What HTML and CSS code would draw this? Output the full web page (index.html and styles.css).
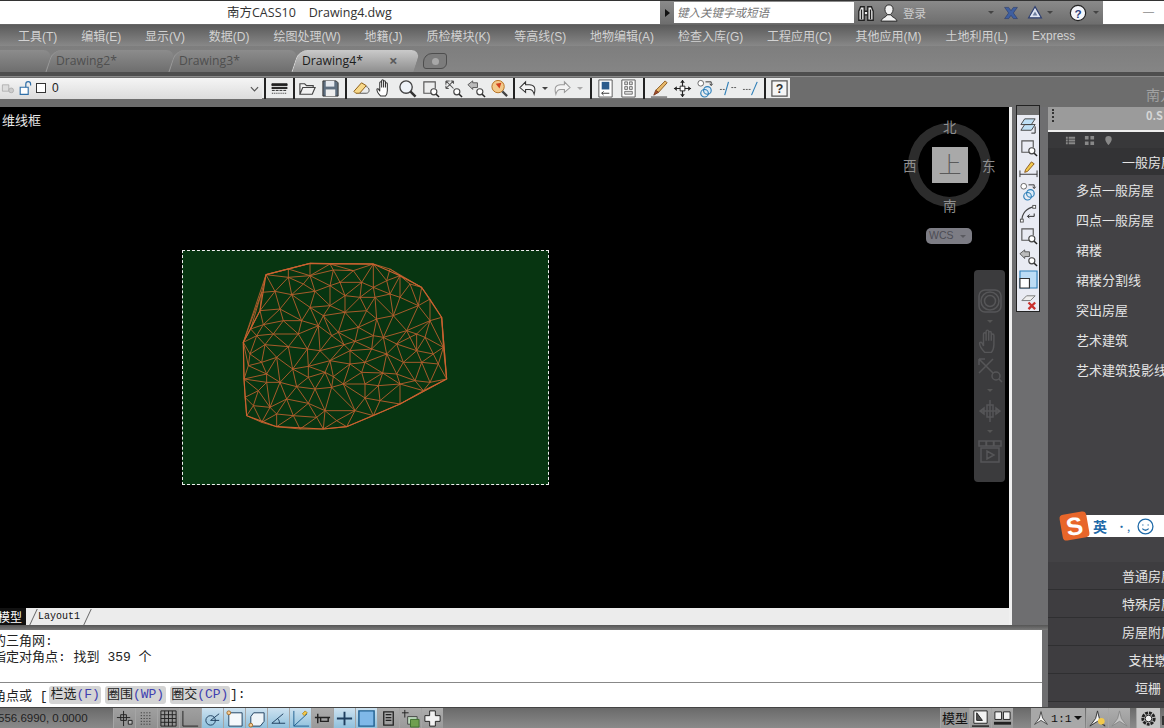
FILE: index.html
```html
<!DOCTYPE html>
<html lang="zh-CN">
<head>
<meta charset="utf-8">
<title>南方CASS10 Drawing4.dwg</title>
<link rel="stylesheet" href="styles.css">
</head>
<body>
<svg class="defs" width="0" height="0">
  <symbol id="mag" viewBox="0 0 20 20"><circle cx="8.500" cy="8.500" r="6.500" fill="#eef3f8" stroke="#444" stroke-width="1.400"/><path d="M13 13l5.500 5.500" stroke="#333" stroke-width="2.600" fill="none"/></symbol>
  <symbol id="zwin" viewBox="0 0 20 20"><path d="M11 15H3V3h12v7" fill="none" stroke="#555" stroke-width="1.200"/><circle cx="13.500" cy="13.500" r="3.200" fill="#fff" stroke="#444" stroke-width="1.200"/><path d="M16 16l3 3" stroke="#222" stroke-width="1.600"/></symbol>
  <symbol id="zext" viewBox="0 0 20 20"><path d="M2 2l8 8M2 2h4M2 2v4M10 2l-8 8M2 10h3M2 10V7M10 2H7M10 2v3" fill="none" stroke="#555" stroke-width="1.100"/><circle cx="13.500" cy="13.500" r="3.200" fill="#fff" stroke="#444" stroke-width="1.200"/><path d="M16 16l3 3" stroke="#222" stroke-width="1.600"/></symbol>
  <symbol id="zprev" viewBox="0 0 20 20"><path d="M1 6l5-4v2h5v5H6v2z" fill="#bbb" stroke="#555"/><circle cx="13.500" cy="13.500" r="3.200" fill="#fff" stroke="#444" stroke-width="1.200"/><path d="M16 16l3 3" stroke="#222" stroke-width="1.600"/></symbol>
  <symbol id="two" viewBox="0 0 20 20"><path d="M6 3h11L13 9H2zM6 9h11l-4 6H2z" fill="#bfe0f5" stroke="#444"/><path d="M17 11v7h-4" fill="none" stroke="#222"/></symbol>
  <symbol id="circles" viewBox="0 0 20 20"><circle cx="5" cy="4.500" r="3" fill="#fff" stroke="#666"/><circle cx="12" cy="12" r="4" fill="#dcebf7" stroke="#2f7fb8" stroke-width="1.200"/><circle cx="9" cy="15" r="4" fill="none" stroke="#2f7fb8" stroke-width="1.200"/><path d="M10 3h6v3M14.500 5l1.500 2 1.500-2" fill="none" stroke="#333"/></symbol>
  <symbol id="hand" viewBox="0 0 20 20"><path d="M6 18c-2-2-4-5-4-7 0-1 1.500-1 2 0l1 2V4c0-1.500 2-1.500 2 0v5-7c0-1.500 2-1.500 2 0v7-6c0-1.500 2-1.500 2 0v6-4c0-1.500 2-1.500 2 0v7c0 3-1 5-2 6z" fill="#fff" stroke="#333" stroke-width="1.100"/></symbol>
</svg>

<header class="titlebar">
  <div class="title">南方CASS10 &nbsp;&nbsp; Drawing4.dwg</div>
  <div class="infocenter">
    <span class="ic-arrow"></span>
    <span class="search">键入关键字或短语</span>
    <svg class="ic ic-bino" viewBox="0 0 20 20"><path d="M2 18V8l2-5h4v15zM18 18V8l-2-5h-4v15zM8 8h4v4H8z" fill="#eee" stroke="#222" stroke-width="1.500"/><path d="M5 6v11M15 6v11" stroke="#222" stroke-width="1.500"/></svg>
    <svg class="ic ic-user" viewBox="0 0 20 20"><path d="M10 1c-3 0-4.500 2-4.500 5s2 6 4.500 6 4.500-3 4.500-6-1.500-5-4.500-5z" fill="#f2f2f2" stroke="#222"/><path d="M1 19c1-4 6-4 7-7h4c1 3 6 3 7 7z" fill="#f2f2f2" stroke="#222"/></svg>
    <span class="login">登录</span>
    <span class="drop drop-user"></span>
    <svg class="ic ic-x" viewBox="0 0 20 20"><path d="M2 3h5l3 4 3-4h5l-5 7 5 7h-5l-3-4-3 4H2l5-7z" fill="#3f5f9f" stroke="#1d2f60" stroke-width=".600"/></svg>
    <svg class="ic ic-a" viewBox="0 0 20 20"><path d="M10 2l8 14H2z" fill="#dfe5f2" stroke="#2e3f70" stroke-width="1.500"/><path d="M10 8l3 5H7z" fill="#6f7f9f"/></svg>
    <span class="drop drop-a"></span>
    <svg class="ic ic-help" viewBox="0 0 20 20"><circle cx="10" cy="10" r="8.500" fill="#f4f6fb" stroke="#222" stroke-width="1.300"/><text x="10" y="15" text-anchor="middle" class="help-q">?</text></svg>
    <span class="drop drop-help"></span>
  </div>
  <div class="minimize">—</div>
</header>

<nav class="menubar">
  <span>工具(T)</span><span>编辑(E)</span><span>显示(V)</span><span>数据(D)</span><span>绘图处理(W)</span><span>地籍(J)</span><span>质检模块(K)</span><span>等高线(S)</span><span>地物编辑(A)</span><span>检查入库(G)</span><span>工程应用(C)</span><span>其他应用(M)</span><span>土地利用(L)</span><span>Express</span>
</nav>

<div class="tabbar">
  <div class="tab tab-first"></div>
  <div class="tab">Drawing2*</div>
  <div class="tab">Drawing3*</div>
  <div class="tab tab-active">Drawing4*<span class="tab-x">×</span></div>
  <div class="tab-new"><span></span></div>
</div>

<div class="toolrow">
  <div class="toolbar">
    <div class="layer">
      <svg class="ic16" viewBox="0 0 20 20"><path d="M3 6h8v8H3z" fill="#ddd" stroke="#aaa"/><circle cx="14" cy="13" r="3" fill="#ccc" stroke="#aaa"/></svg>
      <svg class="ic16" viewBox="0 0 20 20"><path d="M4 9h10v9H4z" fill="#fff" stroke="#2f6fa8" stroke-width="1.400"/><path d="M11 9V5c0-4 6-4 6 0v2" fill="none" stroke="#2f6fa8" stroke-width="1.500"/></svg>
      <span class="swatch"></span>
      <span class="layer-name">0</span>
      <svg class="chev" viewBox="0 0 10 6"><path d="M1 1l4 4 4-4" fill="none" stroke="#555" stroke-width="1.300"/></svg>
    </div>
    <i class="sep"></i>
    <span class="tb tb-s"><svg viewBox="0 0 20 20"><path d="M2 5h16v2H2zM2 9h16v1H2zM2 12h3m1 0h3m1 0h3m1 0h3M2 15h1m1 0h1m1 0h1m1 0h1m1 0h1m1 0h1m1 0h1m1 0h1" stroke="#222" fill="#222"/></svg></span>
    <i class="sep"></i>
    <span class="tb"><svg viewBox="0 0 20 20"><path d="M2 16V5h5l2 2h7v2M2 16l3-7h13l-3 7z" fill="#f2f2f2" stroke="#444" stroke-width="1.200"/></svg></span>
    <span class="tb"><svg viewBox="0 0 20 20"><path d="M2 2h14l2 2v14H2z" fill="#5f6f80" stroke="#333"/><path d="M5 2h9v6H5z" fill="#e4e8ee"/><path d="M5 11h10v7H5z" fill="#eee"/></svg></span>
    <i class="sep sep-w"></i>
    <span class="tb"><svg viewBox="0 0 20 20"><path d="M2 13L10 4l5 3-7 8H4z" fill="#f8d98a" stroke="#8a5a10"/><path d="M8 15h7c4 0 4-6 0-7" fill="none" stroke="#555"/></svg></span>
    <span class="tb"><svg viewBox="0 0 20 20"><use href="#hand"/></svg></span>
    <span class="tb"><svg viewBox="0 0 20 20"><use href="#mag"/></svg></span>
    <span class="tb"><svg viewBox="0 0 20 20"><use href="#zwin"/></svg></span>
    <span class="tb"><svg viewBox="0 0 20 20"><use href="#zext"/></svg></span>
    <span class="tb"><svg viewBox="0 0 20 20"><use href="#zprev"/></svg></span>
    <span class="tb"><svg viewBox="0 0 20 20"><circle cx="8.500" cy="8" r="6.500" fill="#f3c98a" stroke="#b5701f"/><path d="M6 5l6-1-2 6z" fill="#d2401e"/><path d="M13 13l5 5" stroke="#444" stroke-width="2.400"/></svg></span>
    <i class="sep"></i>
    <span class="tb"><svg viewBox="0 0 20 20"><path d="M2 9l6-6v3h4c5 0 7 3 5 10-1-4-3-5-5-5H8v3z" fill="#f4f4f4" stroke="#333" stroke-width="1.100"/></svg></span>
    <span class="tb-drop"></span>
    <span class="tb tb-off"><svg viewBox="0 0 20 20"><path d="M18 9l-6-6v3H8c-5 0-7 3-5 10 1-4 3-5 5-5h4v3z" fill="#f4f4f4" stroke="#999" stroke-width="1.100"/></svg></span>
    <span class="tb-drop tb-drop-off"></span>
    <i class="sep sep-l"></i>
    <span class="tb"><svg viewBox="0 0 20 20"><path d="M3 1h14v18H3z" fill="#fff" stroke="#555"/><path d="M6 3h8v8H6z" fill="#2c5c8c"/><path d="M6 15h8M6 15l2-2M6 15l2 2" stroke="#333" fill="none"/></svg></span>
    <span class="tb"><svg viewBox="0 0 20 20"><path d="M3 1h14v18H3z" fill="#fff" stroke="#555"/><path d="M6 3h3v3H6zM11 3h3v3h-3zM6 8h3v3H6zM11 8h3v3h-3zM6 13h8v3H6z" fill="#ddd" stroke="#555" stroke-width=".800"/></svg></span>
    <i class="sep sep-w"></i>
    <span class="tb"><svg viewBox="0 0 20 20"><path d="M16 2l2 2-9 10-3-2z" fill="#e8b96a" stroke="#8a5a20"/><path d="M6 12l3 2-5 3z" fill="#a8502a" stroke="#7a3a20"/><path d="M1 19h17" stroke="#333"/></svg></span>
    <span class="tb"><svg viewBox="0 0 20 20"><path d="M10 1v18M1 10h18" stroke="#222" stroke-width="1.200"/><path d="M10 1l-2.500 3h5zM10 19l-2.500-3h5zM1 10l3-2.500v5zM19 10l-3-2.500v5z" fill="#222"/><path d="M7.500 7.500h5v5h-5z" fill="#fff" stroke="#222"/></svg></span>
    <span class="tb"><svg viewBox="0 0 20 20"><use href="#circles"/></svg></span>
    <span class="tb"><svg viewBox="0 0 20 20"><path d="M1 11h5M13 9h6" stroke="#555" stroke-dasharray="2 1"/><path d="M6 17L10 3" stroke="#2f7fb8" stroke-width="1.200"/></svg></span>
    <span class="tb"><svg viewBox="0 0 20 20"><path d="M1 11h9" stroke="#555" stroke-dasharray="2 1"/><path d="M10 17L16 3" stroke="#2f7fb8" stroke-width="1.200"/></svg></span>
    <i class="sep"></i>
    <span class="tb"><svg viewBox="0 0 20 20"><path d="M2 2h16v16H2z" fill="#f5f5f5" stroke="#555" stroke-width="1.300"/><text x="10" y="15" text-anchor="middle" class="help-q help-q-dark">?</text></svg></span>
  </div>
  <div class="app-mark">南方</div>
</div>

<main class="workspace">
  <div class="leftcol">
    <div class="upper">
      <div class="canvas-col">
        <div class="canvas">
          <div class="view-label">维线框</div>
          <div class="sheet">
            <svg class="mesh" viewBox="0 0 690 540"><path id="mesh-lines" class="mesh-lines"/><path class="mesh-hull" d="M108 62L240 28 430 30 510 65 575 100 635 190 650 375 510 450 350 518 280 525 140 518 50 485 42 375 40 265 90 170Z"/></svg>
          </div>
          <div class="viewcube">
            <div class="ring"></div>
            <div class="cube">上</div>
            <span class="dir dir-n">北</span>
            <span class="dir dir-s">南</span>
            <span class="dir dir-e">东</span>
            <span class="dir dir-w">西</span>
          </div>
          <div class="wcs">WCS<i></i></div>
          <div class="navbar">
            <svg viewBox="0 0 26 26"><rect x="2" y="2" width="22" height="22" rx="6"/><circle cx="13" cy="13" r="9"/><circle cx="13" cy="13" r="5.500"/></svg>
            <i class="nav-drop"></i>
            <svg class="nav-tight" viewBox="0 0 20 20"><path d="M6 18c-2-2-4-5-4-7 0-1 1.500-1 2 0l1 2V4c0-1.500 2-1.500 2 0v5-7c0-1.500 2-1.500 2 0v7-6c0-1.500 2-1.500 2 0v6-4c0-1.500 2-1.500 2 0v7c0 3-1 5-2 6z"/></svg>
            <svg viewBox="0 0 26 26"><path d="M2 2l14 14M2 2h6M2 2v6M16 2L2 16"/><circle cx="19" cy="19" r="4"/><path d="M22 22l3 3"/></svg>
            <i class="nav-drop"></i>
            <svg viewBox="0 0 26 26"><path d="M13 2v22M10 7h6v12h-6zM3 13h20M3 13l4-3v6zM23 13l-4-3v6z"/></svg>
            <i class="nav-drop"></i>
            <svg viewBox="0 0 26 26"><path d="M2 2h7v5H2zM9.500 2h7v5h-7zM17 2h7v5h-7zM4 9h18v14H4zM10 12v8l7-4z"/></svg>
          </div>
        </div>
        <div class="layouts">
          <span class="lt-model">模型</span>
          <span class="lt-sl"></span>
          <span class="lt-name">Layout1</span>
          <span class="lt-sl"></span>
        </div>
      </div>
      <div class="gutter">
        <div class="vtools">
          <div class="grip"></div>
          <svg viewBox="0 0 20 20"><use href="#two"/></svg>
          <svg viewBox="0 0 20 20"><use href="#zwin"/></svg>
          <svg viewBox="0 0 20 20"><path d="M13 2l3 2-7 8-3 1 1-3z" fill="#f2c94c" stroke="#8a5a20"/><path d="M1 11v7M19 11v7M1 15h18" stroke="#333" fill="none"/></svg>
          <svg viewBox="0 0 20 20"><use href="#circles"/></svg>
          <svg viewBox="0 0 20 20"><path d="M3 18C3 10 8 4 16 3" fill="none" stroke="#444" stroke-width="1.200"/><path d="M16 10v3H9M9 13l2-2M9 13l2 2" fill="none" stroke="#222"/><rect x="14.500" y="1.500" width="3" height="3" fill="#fff" stroke="#555"/><rect x="1.500" y="16" width="3" height="3" fill="#fff" stroke="#555"/></svg>
          <svg viewBox="0 0 20 20"><use href="#zwin"/></svg>
          <svg viewBox="0 0 20 20"><use href="#zprev"/></svg>
          <svg viewBox="0 0 20 20"><path d="M1 1h18v18H1z" fill="#bcdcf5" stroke="#2f7fb8" stroke-width="1.200"/><path d="M1 9h10v10H1z" fill="#fff" stroke="#333" stroke-width="1.200"/></svg>
          <svg viewBox="0 0 20 20"><path d="M3 9l5-5h9l-5 5z" fill="#eee" stroke="#777"/><path d="M10 11l7 7M17 11l-7 7" stroke="#c9302c" stroke-width="2.400"/></svg>
        </div>
      </div>
    </div>
    <div class="band"></div>
    <section class="command">
      <div class="history">
        <div class="hist-line">的三角网:</div>
        <div class="hist-line">指定对角点: 找到 359 个</div>
      </div>
      <div class="prompt"><span class="prompt-lead">角点或 [</span><span class="pill">栏选<b>(F)</b></span><span class="pill">圈围<b>(WP)</b></span><span class="pill">圈交<b>(CP)</b></span><span>]:</span></div>
    </section>
  </div>
  <aside class="palette">
    <div class="pal-top"><i class="pal-grip"></i><span>0.S</span></div>
    <div class="pal-tabs">
      <svg viewBox="0 0 12 12"><path d="M1 2h2v2H1zM4 2h7v2H4zM1 5h2v2H1zM4 5h7v2H4zM1 8h2v2H1zM4 8h7v2H4z"/></svg>
      <svg viewBox="0 0 12 12"><path d="M1 1h4v4H1zM7 1h4v4H7zM1 7h4v4H1zM7 7h4v4H7z"/></svg>
      <svg viewBox="0 0 12 12"><path d="M6 1a3.500 3.500 0 0 1 3.500 3.500C9.500 7 6 11 6 11S2.500 7 2.500 4.500A3.500 3.500 0 0 1 6 1z"/></svg>
    </div>
    <div class="pal-head">一般房屋</div>
    <ul class="pal-list">
      <li>多点一般房屋</li><li>四点一般房屋</li><li>裙楼</li><li>裙楼分割线</li><li>突出房屋</li><li>艺术建筑</li><li>艺术建筑投影线</li>
    </ul>
    <div class="pal-foot">
      <div>普通房屋</div><div>特殊房屋</div><div>房屋附属</div><div>支柱墩</div><div>垣栅</div>
    </div>
    <div class="sogou">
      <span class="sg-logo">S</span>
      <span class="sg-bar"><b>英</b><em>•,</em><svg viewBox="0 0 16 16"><circle cx="8" cy="8" r="7"/><path d="M5 10c2 2 4 2 6 0M5.500 6v1M10.500 6v1"/></svg><em>•</em></span>
    </div>
  </aside>
</main>

<footer class="statusbar">
  <div class="coords">556.6990, 0.0000</div>
  <div class="st-cells">
    <span class="st"><svg viewBox="0 0 20 20"><path d="M9 2v16M2 9h14M6 6h6v6H6z"/><path class="st-f" d="M14 12h4v4h-4z"/></svg></span>
    <span class="st"><svg viewBox="0 0 20 20"><path d="M4 4h12M4 7h12M4 10h12M4 13h12M4 16h12" stroke-dasharray="1 2"/></svg></span>
    <span class="st st-w"><svg viewBox="0 0 20 20"><path d="M2 2h16v16H2zM6 2v16M10 2v16M14 2v16M2 6h16M2 10h16M2 14h16"/></svg></span>
    <span class="st"><svg viewBox="0 0 20 20"><path d="M2 2v16h16"/></svg></span>
    <span class="st on"><svg viewBox="0 0 20 20"><circle cx="8" cy="12" r="5"/><path d="M8 12l9-7M8 12h9"/></svg></span>
    <span class="st on"><svg viewBox="0 0 20 20"><path d="M4 4h14v14H4z" fill="#f4f8fb"/><circle cx="4" cy="4" r="2" class="st-o"/></svg></span>
    <span class="st on"><svg viewBox="0 0 20 20"><path d="M7 4h11v9l-4 5H4V8z" fill="#eef4f8"/><circle cx="4" cy="17" r="2" class="st-o"/></svg></span>
    <span class="st on"><svg viewBox="0 0 20 20"><path d="M15 5L3 15h14M11 15c0-3-1-4-2-5"/></svg></span>
    <span class="st on"><svg viewBox="0 0 20 20"><path d="M3 2v16h16M3 18L17 5" stroke="#1f5f8f"/><path d="M12 5l3-3 2 2-3 3z" fill="#f2c94c" stroke="#b58a20"/></svg></span>
    <span class="st st-g"><svg viewBox="0 0 20 20"><path d="M5 5v10M2 9h16M8 9h8v4H8z" stroke-width="1.500"/></svg></span>
    <span class="st on"><svg viewBox="0 0 20 20"><path d="M10 3v14M2 10h16" stroke-width="2"/></svg></span>
    <span class="st on"><svg viewBox="0 0 20 20"><path d="M2 2h16v16H2z" class="st-b"/></svg></span>
    <span class="st st-g"><svg viewBox="0 0 20 20"><path d="M5 3h10v14H5zM7 6h6M7 9h6M7 12h6" stroke-width="1.400"/></svg></span>
    <span class="st st-g"><svg viewBox="0 0 20 20"><path d="M4 1v8M1 4h7"/><path d="M7 8h10v8H7z" fill="#bcd9bc" stroke="#444"/><path d="M10 11h9v8h-9z" fill="#6f9f4f" stroke="#3f6f2f"/></svg></span>
    <span class="st st-g"><svg viewBox="0 0 20 20"><path d="M7 2h6v5h5v6h-5v5H7v-5H2V7h5z" fill="#f2f2f2"/></svg></span>
  </div>
  <div class="st-right">
    <span class="st-model">模型</span>
    <span class="st st-g"><svg viewBox="0 0 20 20"><path d="M3 2h14v13H3z" fill="#f2f2f2"/><path d="M6 4v8l6 0z" fill="#555"/><path d="M1 18h18" stroke-width="1.500"/></svg></span>
    <span class="st st-g"><svg viewBox="0 0 20 20"><path d="M2 3h7v8H2zM11 3h7v8h-7z" fill="#f2f2f2"/><path d="M1 15h18" stroke-width="3"/></svg></span>
    <span class="st-scale"><svg viewBox="0 0 20 20"><path d="M10 2l2 8 6 8-8-5-8 5 6-8z" fill="#f4f4f4" stroke="#333"/></svg><em>1:1</em><i></i></span>
    <span class="st st-g st-gap"><svg viewBox="0 0 20 20"><path d="M10 2l2 8 6 8-8-5-8 5 6-8z" fill="#f4f4f4" stroke="#333"/><circle cx="14" cy="13" r="3.500" fill="#f2c94c" stroke="none"/></svg></span>
    <span class="st st-g"><svg viewBox="0 0 20 20"><path d="M10 2l2 8 6 8-8-5-8 5 6-8z" fill="#c4c4c4" stroke="#888"/></svg></span>
    <span class="st st-gear"><svg viewBox="0 0 20 20"><circle cx="10" cy="10" r="6" fill="none" stroke-width="3" stroke-dasharray="3 1"/><circle cx="10" cy="10" r="3.500" fill="#f2f2f2"/></svg></span>
    <span class="st-box"></span>
  </div>
</footer>
<script src="mesh.js"></script>
</body>
</html>
```
FILE: styles.css
```css
* { box-sizing: border-box; }
html, body { margin: 0; width: 1164px; height: 728px; overflow: hidden; }
body { display: flex; flex-direction: column; background: #6e6e70; color: #222; font: 12.5px "Liberation Sans", "Noto Sans CJK SC", sans-serif; }
.defs { position: absolute; }
svg { display: block; }

.titlebar { height: 25px; flex: none; display: flex; background: #fff; border-top: 1px solid #333; border-bottom: 1px solid #666; }
.title { width: 660px; padding-left: 227px; font: 12.5px/23px "Open Sans", "Noto Sans CJK SC", sans-serif; color: #333; white-space: pre; }
.infocenter { width: 443px; display: flex; align-items: center; position: relative; background: linear-gradient(#8a8a8a, #6e6e6e); }
.ic-arrow { width: 0; margin: 0 4px 0 5px; border-left: 5px solid #111; border-top: 4px solid transparent; border-bottom: 4px solid transparent; }
.search { width: 180px; height: 21px; margin-top: -1px; background: #fff; color: #777; font: italic 11.5px/21px "Noto Sans CJK SC", sans-serif; padding-left: 3px; }
.ic { width: 16px; height: 16px; flex: none; }
.ic-bino { width: 18px; height: 18px; margin-left: 3px; }
.ic-user { width: 18px; height: 18px; margin-left: 5px; }
.login { margin-left: 5px; color: #ccc; font-size: 11.5px; }
.drop { width: 0; border-top: 3px solid #444; border-left: 3px solid transparent; border-right: 3px solid transparent; }
.drop-user { margin-left: 62px; }
.ic-x { margin-left: 9px; }
.ic-a { margin-left: 8px; }
.drop-a { margin-left: 4px; }
.ic-help { margin-left: 16px; width: 18px; height: 18px; }
.drop-help { margin-left: 6px; }
.help-q { font: bold 13px "Liberation Sans", sans-serif; fill: #2a3f80; }
.help-q-dark { fill: #333; }
.minimize { margin-left: 40px; line-height: 20px; color: #888; font-size: 11px; }

.menubar { height: 21px; flex: none; display: flex; gap: 23.850px; padding-left: 18px; align-items: center; background: linear-gradient(#5b5b5b, #7a7a7a 70%, #888); color: #d2d2d2; font-size: 12px; white-space: nowrap; }

.tabbar { height: 31px; flex: none; display: flex; align-items: flex-end; padding-bottom: 5px; background: linear-gradient(#7e7e7e 0, #858585 26px, #4e4e4e 26px, #4e4e4e 30px, #8a8a8a 30px); overflow: hidden; }
.tab { width: 123px; height: 22px; flex: none; padding-left: 9px; position: relative; z-index: 0; color: #4f4f4f; font: 12.2px/22px "Open Sans", sans-serif; }
.tab::before { content: ""; position: absolute; z-index: -1; left: 2px; right: -2px; top: 0; bottom: 0; border-radius: 9px 9px 0 0; background: linear-gradient(#8c8c8c, #6e6e6e); border-left: 1px solid #9a9a9a; transform: skewX(-18deg); }
.tab-first { width: 47px; }
.tab-first::before { left: -20px; }
.tab-active { width: 122px; z-index: 1; color: #1c1c1c; }
.tab-active::before { background: linear-gradient(#cacaca, #8e8e8e); border-left-color: #ddd; }
.tab-x { position: absolute; left: 96px; top: -1px; color: #5a5a5a; font-size: 15px; font-weight: bold; }
.tab-new { width: 24px; height: 16px; margin: 0 0 3px 8px; padding: 4px 0 0 8px; background: #7c7c7c; border: 1px solid #4e4e4e; border-radius: 9px 3px 6px 3px; }
.tab-new span { display: block; width: 7px; height: 7px; border-radius: 50%; background: #a8a8a8; }

.toolrow { height: 30px; flex: none; display: flex; justify-content: space-between; padding-top: 1px; background: #6d6d6d; }
.toolbar { width: 790px; height: 21px; display: flex; align-items: center; background: #eceded; border-bottom: 1px solid #777; }
.layer { width: 262px; height: 21px; flex: none; display: flex; align-items: center; gap: 1px; background: linear-gradient(#f5f5f5, #dcdcdc); position: relative; }
.ic16 { width: 16px; height: 16px; }
.swatch { width: 10px; height: 10px; margin-left: 2px; background: #fff; border: 1px solid #333; }
.layer-name { margin-left: 5px; font-size: 12px; color: #222; }
.chev { position: absolute; right: 3px; top: 8px; width: 9px; height: 6px; }
.sep { width: 2px; height: 21px; flex: none; margin: 0 1.5px; background: #222; }
.sep-w { margin: 0 3px; }
.sep-l { margin: 0 1.5px 0 4px; }
.tb { width: 23px; height: 21px; flex: none; display: flex; align-items: center; justify-content: center; }
.tb svg { width: 19px; height: 19px; }
.tb-s { width: 24px; }
.tb-drop { width: 0; flex: none; margin: 0 3px; border-top: 3px solid #444; border-left: 3px solid transparent; border-right: 3px solid transparent; }
.tb-drop-off { border-top-color: #aaa; }
.app-mark { width: 18px; overflow: hidden; white-space: nowrap; color: #a2a2a2; font-size: 14px; line-height: 18px; margin-top: 8px; }

.workspace { flex: 1; min-height: 0; display: flex; }
.leftcol { width: 1048px; flex: none; display: flex; flex-direction: column; }
.upper { height: 518px; flex: none; display: flex; }
.canvas-col { width: 1012px; flex: none; display: flex; flex-direction: column; border-right: 3px solid #f0f0f0; }
.canvas { height: 501px; flex: none; position: relative; overflow: hidden; background: #000; }
.view-label { position: absolute; left: 2px; top: 3px; color: #e8e8e8; font-size: 13px; }
.sheet { position: absolute; left: 182px; top: 143px; width: 367px; height: 235px; background: #073511; border: 1px dashed #eee; }
.mesh { position: absolute; left: 47px; top: 3px; width: 230px; height: 180px; }
.mesh-lines { fill: none; stroke: #b9602e; stroke-width: 2.700; }
.mesh-hull { fill: none; stroke: #cc6230; stroke-width: 3.400; }

.viewcube { position: absolute; left: 901px; top: 9px; width: 98px; height: 98px; }
.ring { position: absolute; left: 7px; top: 7px; width: 83px; height: 84px; border: 10px solid #2c2c2c; border-radius: 50%; }
.cube { position: absolute; left: 31px; top: 31px; width: 36px; height: 36px; background: #a9a9a9; color: #5a5a5a; font: 300 23px/33px "Noto Sans CJK SC", sans-serif; text-align: center; }
.dir { position: absolute; color: #8f8f8f; font: 13.500px/14px "Noto Sans CJK SC", sans-serif; }
.dir-n { left: 42px; top: 3px; }
.dir-s { left: 42px; top: 82px; }
.dir-e { left: 81px; top: 42px; }
.dir-w { left: 2px; top: 42px; }
.wcs { position: absolute; left: 926px; top: 121px; width: 46px; height: 16px; border-radius: 5px; background: #7c7c84; color: #4c4c54; font-size: 10.500px; line-height: 15px; padding-left: 3px; }
.wcs i { position: absolute; right: 6px; top: 7px; border-top: 3px solid #5a5a60; border-left: 3px solid transparent; border-right: 3px solid transparent; }

.navbar { position: absolute; left: 974px; top: 163px; width: 31px; height: 212px; padding-top: 18px; display: flex; flex-direction: column; align-items: center; gap: 6px; background: #3b3b3d; border-radius: 4px; }
.navbar svg { width: 26px; height: 26px; flex: none; fill: none; stroke: #565658; stroke-width: 1.500; }
.navbar .nav-tight { margin-bottom: -4px; stroke-width: 1.100; }
.nav-drop { width: 0; flex: none; border-top: 3px solid #555; border-left: 3px solid transparent; border-right: 3px solid transparent; }

.layouts { height: 17px; flex: none; display: flex; align-items: center; background: #ececec; font: 10px "Liberation Mono", monospace; color: #111; }
.lt-model { width: 28px; height: 17px; flex: none; margin-left: -2px; background: #111; color: #fff; font: 12px/17px "Noto Sans CJK SC", sans-serif; }
.lt-sl { width: 8px; height: 16px; margin: 0 3px 0 0; border-right: 1px solid #666; transform: skewX(-25deg); }
.lt-name { margin-left: 1px; }

.gutter { width: 36px; flex: none; }
.vtools { width: 24px; height: 207px; margin: -2px 0 0 4px; position: relative; display: flex; flex-direction: column; align-items: center; gap: 3px; background: #e9ebf3; border: 1px solid #222; }
.grip { align-self: stretch; flex: none; height: 9px; margin-bottom: -2px; background: #707070; }
.vtools svg { width: 19px; height: 19px; flex: none; }

.band { height: 5px; flex: none; background: linear-gradient(#555, #7a7a7a); }
.command { flex: 1; width: 1042px; background: #fff; color: #222; font: 13px "Liberation Mono", "Noto Sans CJK SC", monospace; overflow: hidden; }
.history { height: 53px; padding-top: 4px; border-bottom: 1px solid #888; }
.hist-line { height: 16px; line-height: 16px; margin-left: -7px; white-space: nowrap; }
.prompt { height: 23px; display: flex; align-items: center; margin-left: -7px; white-space: pre; }
.prompt-lead { margin-right: 1.400px; }
.pill { padding: 0 1.500px; line-height: 18px; background: #d4d4d4; border-radius: 3px; }
.pill + .pill { margin-left: 4px; }
.pill b { font-weight: normal; color: #4040b0; }

.palette { width: 200px; flex: none; display: flex; flex-direction: column; position: relative; background: #434245; color: #e4e4e4; font: 13px "Noto Sans CJK SC", sans-serif; }
.pal-top { height: 25px; flex: none; display: flex; background: #9b9b9b; border-bottom: 2px solid #eee; color: #d6d6d6; font-size: 11px; font-weight: bold; padding-left: 4px; }
.pal-top span { margin-left: 92px; white-space: nowrap; }
.pal-grip { width: 2px; height: 13px; margin-top: 2px; border-left: 2px dotted #333; }
.pal-tabs { height: 16px; flex: none; display: flex; gap: 8px; align-items: center; padding-left: 17px; background: #38383a; }
.pal-tabs svg { width: 11px; height: 11px; fill: #888; }
.pal-head { height: 27px; flex: none; line-height: 27px; text-align: center; background: #333335; }
.pal-list { flex: 1; margin: 0; padding: 0 0 0 28px; list-style: none; }
.pal-list li { height: 30px; line-height: 30px; white-space: nowrap; }
.pal-foot { flex: none; padding-bottom: 5px; }
.pal-foot div { height: 28px; line-height: 27px; text-align: center; background: #3e3d40; border-bottom: 1px solid #2f2f31; }

.sogou { position: absolute; left: 13px; top: 406px; display: flex; align-items: center; }
.sg-logo { width: 27px; height: 26px; flex: none; position: relative; z-index: 1; border-radius: 4px; background: #e8662a; color: #fff; font: bold 25px/26px "Liberation Sans", sans-serif; text-align: center; transform: rotate(-10deg); }
.sg-bar { width: 120px; height: 22px; margin-left: -3px; padding-left: 8px; display: flex; align-items: center; gap: 9px; background: #fff; }
.sg-bar b { color: #1f6aa8; font-size: 14px; }
.sg-bar em { color: #1f6aa8; font-style: normal; font-size: 11px; width: 12px; }
.sg-bar svg { width: 17px; height: 17px; flex: none; fill: none; stroke: #1f6aa8; stroke-width: 1.200; }

.statusbar { height: 21px; flex: none; display: flex; background: linear-gradient(#6a6a6a, #8a8a8a); border-top: 1px solid #444; color: #111; }
.coords { width: 113px; flex: none; margin-left: -2px; font: 11.500px/20px "Liberation Sans", sans-serif; color: #222; white-space: nowrap; }
.st-cells { display: flex; width: 333px; margin-left: 2px; flex: none; }
.st { width: 22px; height: 20px; flex: none; display: flex; align-items: center; justify-content: center; border-left: 1px solid #a5a5a5; background: linear-gradient(#a0a0a0, #8f8f8f); }
.st svg { width: 19px; height: 19px; fill: none; stroke: #222; stroke-width: 1; }
.st.on { background: linear-gradient(#cde2f0, #8fc0dc); }
.st.on svg { stroke: #1f3f5f; }
.st-g { background: linear-gradient(#adadad, #999); }
.st-f { fill: #bbb; }
.st-o { fill: #f2c994; stroke: #a8702a; }
.st-b { fill: #7fb8e8; stroke: #1f5f8f; stroke-width: 1.500; }
.st-right { display: flex; margin-left: 494px; width: 224px; flex: none; }
.st-model { width: 29px; flex: none; background: #999; font: 13px/20px "Noto Sans CJK SC", sans-serif; text-align: center; border-left: 1px solid #a5a5a5; }
.st-right .st:nth-child(3) { margin-right: 18px; }
.st-scale { width: 54px; flex: none; display: flex; align-items: center; gap: 2px; padding-left: 2px; background: #a8a8a8; }
.st-scale svg { width: 16px; height: 16px; }
.st-scale em { font: normal 11.500px "Liberation Mono", monospace; }
.st-scale i { border-top: 4px solid #111; border-left: 4px solid transparent; border-right: 4px solid transparent; }
.st-gap { margin-left: 1px; }
.st-gear { margin-left: 6px; width: 24px; background: #c4c4c4; }
.st-box { width: 6px; height: 9px; margin: 8px 0 0 2px; background: #f2f2f2; border: 1px solid #333; }
```
FILE: mesh.js
```js
// Delaunay triangulation of the surveyed points, in the drawing's own coordinates.
var pts = [[108,62],[240,28],[430,30],[510,65],[575,100],[635,190],[650,375],[510,450],[350,518],[280,525],[140,518],[50,485],[42,375],[40,265],[90,170],
[175,45],[300,30],[480,45],[600,135],[640,280],[580,410],[430,485],[210,525],[95,505],[45,430],[62,225],
[175,70],[240,65],[310,48],[370,50],[395,85],[430,100],[510,130],[565,155],[600,200],[610,300],[625,330],[520,325],[575,325],[530,230],[490,185],[440,195],[410,170],[435,130],[390,130],[345,125],[345,175],[300,155],[280,185],[255,112],[220,90],[185,122],[135,112],[95,115],[240,160],[215,200],[100,212],[80,245],[105,272],[175,278],[205,240],[232,285],[305,245],[325,235],[385,220],[375,262],[342,272],[430,245],[460,250],[425,285],[300,320],[360,330],[405,325],[95,325],[188,345],[235,337],[285,355],[310,368],[110,360],[110,385],[55,335],[235,370],[340,390],[395,355],[458,357],[405,390],[445,395],[405,432],[255,405],[305,400],[200,398],[85,410],[170,435],[120,460],[235,448],[285,470],[320,500],[190,485],[510,390],[600,385],[560,290],
[150,165],[130,240],[160,200],[60,300],[140,310],[270,290],[265,215],[360,290],[470,300],[500,270],[560,240],[480,120],[470,80],[540,90],[330,85],[300,95],[150,385],[140,480],[70,455],[260,490],[375,470],[450,440],[555,380],[500,360],[585,250]];
var edges = {}, d = "";
function inCircle(a, b, c, p) {
  var ax = a[0]-p[0], ay = a[1]-p[1], bx = b[0]-p[0], by = b[1]-p[1], cx = c[0]-p[0], cy = c[1]-p[1];
  var det = (ax*ax+ay*ay)*(bx*cy-cx*by) - (bx*bx+by*by)*(ax*cy-cx*ay) + (cx*cx+cy*cy)*(ax*by-bx*ay);
  var o = (b[0]-a[0])*(c[1]-a[1]) - (b[1]-a[1])*(c[0]-a[0]);
  return o > 0 ? det > 0 : det < 0;
}
for (var i = 0; i < pts.length; i++) for (var j = i+1; j < pts.length; j++) for (var k = j+1; k < pts.length; k++) {
  if ((pts[j][0]-pts[i][0])*(pts[k][1]-pts[i][1]) === (pts[j][1]-pts[i][1])*(pts[k][0]-pts[i][0])) continue;
  var empty = true;
  for (var m = 0; m < pts.length && empty; m++) {
    if (m !== i && m !== j && m !== k && inCircle(pts[i], pts[j], pts[k], pts[m])) empty = false;
  }
  if (empty) { edges[i+"-"+j] = [i,j]; edges[j+"-"+k] = [j,k]; edges[i+"-"+k] = [i,k]; }
}
Object.keys(edges).forEach(function (key) {
  var e = edges[key];
  d += "M" + pts[e[0]].join(" ") + "L" + pts[e[1]].join(" ");
});
document.getElementById("mesh-lines").setAttribute("d", d);
```
